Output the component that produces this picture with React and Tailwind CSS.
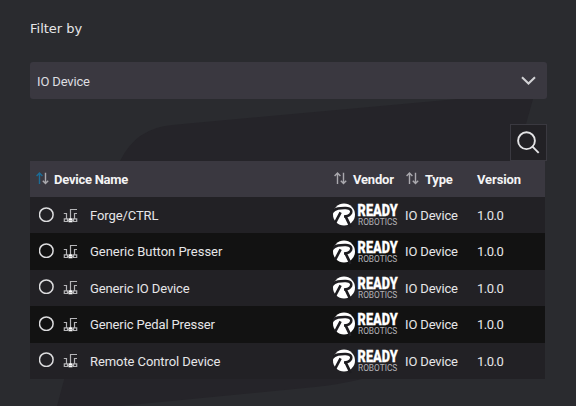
import React from "react";

const devices = [
  { name: "Forge/CTRL", tracking: "tracking-[-0.1px]" },
  { name: "Generic Button Presser", tracking: "tracking-[-0.03px]" },
  { name: "Generic IO Device", tracking: "tracking-[-0.12px]" },
  { name: "Generic Pedal Presser", tracking: "tracking-[-0.12px]" },
  { name: "Remote Control Device", tracking: "tracking-[-0.08px]" },
];

function SortArrows({ active }) {
  return (
    <svg className="h-[13px] w-[13px] shrink-0 -translate-y-px" viewBox="0 0 13 13" fill="none" strokeWidth="1.4">
      <path d="M3.5 12V1.3M0.6 4L3.5 1.1L6.4 4" stroke={active ? "#1b6d98" : "#aaa9ae"} />
      <path d="M9.5 0.8V11.5M6.8 8.7L9.5 11.4L12.2 8.7" stroke="#aaa9ae" />
    </svg>
  );
}

function DeviceIcon() {
  return (
    <svg className="h-[15px] w-[15px] shrink-0" viewBox="0 0 15 15" fill="none" stroke="#b5b5b8">
      <path d="M0.8 5.5H3.5V11M7.5 11V1.5H14M14 5.5H11.5V11" strokeWidth="1.2" />
      <path d="M1.3 10.8H4.5V13.5H1.3ZM10.5 10.8H13.7V13.5H10.5Z" strokeWidth="1.2" />
      <path d="M5.5 10.3H9.5V14.3H5.5Z" fill="#fff" stroke="none" />
      <path d="M4 12.6H11" strokeWidth="1" />
    </svg>
  );
}

function ReadyLogo() {
  return (
    <svg className="h-[26px] w-[66px] shrink-0" viewBox="0 -1 66 26">
      <circle cx="11" cy="11.5" r="11" fill="#fff" />
      <g fill="none" stroke="#1d1c20">
        <path d="M-1 9.2C2.5 5 7 4.9 12.8 5C18.4 5.1 19.4 8.6 17.2 11.2C15.8 12.8 13.6 13.4 11 13.5" strokeWidth="2.5" />
        <path d="M7.6 9.4L2.2 19.6" strokeWidth="2.6" />
        <path d="M12.4 13L15.6 19.6L17.4 24" strokeWidth="2.7" />
      </g>
      <text x="0" y="0" fill="#fff" stroke="#fff" strokeWidth="0.3" fontFamily="Roboto, sans-serif" fontWeight="900" fontSize="16" textLength="51" lengthAdjust="spacingAndGlyphs" transform="translate(24.6 13.2) scale(0.785 1)">READY</text>
      <text x="25" y="22.4" fill="#b4b3b7" fontFamily="Roboto, sans-serif" fontSize="8.2" textLength="39.3" lengthAdjust="spacingAndGlyphs">ROBOTICS</text>
    </svg>
  );
}

function Backdrop() {
  return (
    <svg className="absolute inset-0 h-[406px] w-[576px]" viewBox="0 0 576 406">
      <path d="M172 125L535 92L526 124L460 340Q442 370 362 379Q342 384 315 387L120 406H57L64 380L120 161Q136 128 172 125Z" fill="#252429" />
    </svg>
  );
}

const columns = "grid grid-cols-[303px_73px_71px_68px] items-center";

export default function App() {
  return (
    <div className="relative h-[406px] w-[576px] overflow-hidden bg-[#2a2b2f] font-['Roboto',sans-serif] text-[13px] text-[#e6e6e8]">
      <Backdrop />
      <main className="relative pl-[30px] pt-[18px]">
        <label className="block h-[44px] pt-px font-['DejaVu_Sans',sans-serif] text-[13px] leading-[20px]">Filter by</label>
        <button className="flex h-[37px] w-[517px] items-center justify-between rounded-[3px] bg-[#3a3840] pl-[7px] pr-[11px] pt-[2px]">
          <span className="tracking-[-0.15px] text-[#dedee0]">IO Device</span>
          <svg className="h-[9px] w-[15px] -translate-y-px" viewBox="0 0 15 9" fill="none" stroke="#d2d2d5" strokeWidth="2">
            <path d="M1 1.2L7.5 7.5L14 1.2" />
          </svg>
        </button>
        <div className="flex h-[62px] w-[517px] items-end justify-end">
          <button className="flex h-[37px] w-[37px] items-center justify-center border border-[#3a3940] bg-[#222125] pb-px pr-px">
            <svg className="h-[23px] w-[23px]" viewBox="0 0 23 23" fill="none" stroke="#e4e4e6" strokeWidth="1.9">
              <circle cx="9.5" cy="9.7" r="8.4" />
              <path d="M15.5 15.7L21.7 21.9" />
            </svg>
          </button>
        </div>
        <section className="w-[515px]">
          <div className={`${columns} h-[36px] bg-[#3a3840] pt-px font-bold text-[#f4f4f5]`}>
            <div className="flex items-center gap-[5px] pl-[6px]"><SortArrows active /><span className="tracking-[-0.25px]">Device Name</span></div>
            <div className="flex items-center gap-[6px] pl-px"><SortArrows /><span className="tracking-[-0.2px]">Vendor</span></div>
            <div className="flex items-center gap-[6px]"><SortArrows /><span className="tracking-[-0.2px]">Type</span></div>
            <div className="tracking-[-0.1px]">Version</div>
          </div>
          {devices.map((device, i) => (
            <div key={device.name} className={`${columns} h-[36.4px] ${i % 2 ? "bg-[#121212]" : "bg-[#222125]"}`}>
              <div className="flex items-center pl-[9px]">
                <svg className="h-[15px] w-[15px] shrink-0 -translate-y-px" viewBox="0 0 15 15" fill="none" stroke="#dddddf" strokeWidth="1.5">
                  <circle cx="7.3" cy="7.7" r="6.8" />
                </svg>
                <span className="ml-[9px] flex"><DeviceIcon /></span>
                <span className={`ml-[12px] whitespace-nowrap pt-px ${device.tracking}`}>{device.name}</span>
              </div>
              <ReadyLogo />
              <div className="-ml-px pt-px tracking-[-0.15px]">IO Device</div>
              <div className="pt-px tracking-[-0.5px]">1.0.0</div>
            </div>
          ))}
        </section>
      </main>
    </div>
  );
}
